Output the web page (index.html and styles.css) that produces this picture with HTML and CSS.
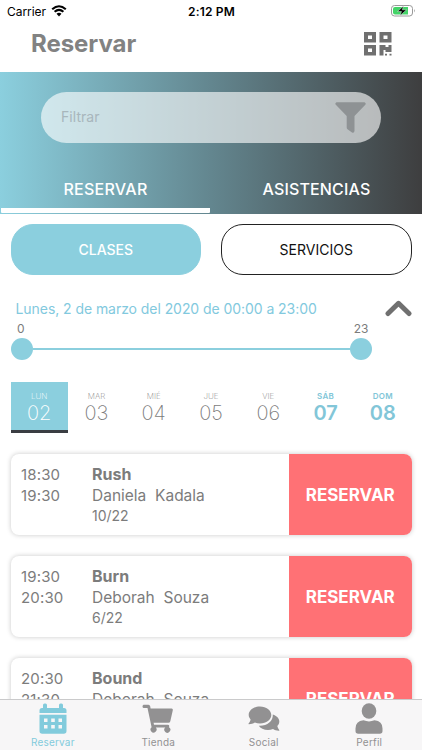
FILE: index.html
```html
<!DOCTYPE html>
<html lang="es">
<head>
<meta charset="utf-8">
<meta name="viewport" content="width=device-width, initial-scale=1">
<title>Reservar</title>
<link rel="stylesheet" href="styles.css">
</head>
<body>
<div class="app">
  <div class="status">
    <div class="status-left"><span class="carrier">Carrier</span>
      <svg class="wifi" viewBox="0 0 16 12"><path d="M1.2 4.3Q8-1.8 14.8 4.3M3.6 6.8Q8 3 12.4 6.8" fill="none" stroke="#000" stroke-width="2.1"/><path d="M5.5 8.7Q8 6.7 10.5 8.7L8 11.5Z"/></svg>
    </div>
    <span class="clock">2:12 PM</span>
    <svg class="battery" viewBox="0 0 25 12"><rect x=".5" y=".5" width="21" height="10.5" rx="3" fill="#fff" stroke="#999"/><path d="M4 2h13v7.500H4Q2 9.500 2 7.500V4Q2 2 4 2Z" fill="#43d468"/><path d="M23 4q1.700 1.700 0 3.500Z" fill="#999"/><path d="M12.500 1 6.500 6.500h4L9 10.700l6.500-5.900h-4.200Z" stroke="#fff" stroke-width=".4"/></svg>
  </div>
  <header class="header">
    <h1>Reservar</h1>
    <svg class="qr" viewBox="0 0 28 24" fill="#707070"><path fill-rule="evenodd" d="M0 0h12v10.500H0ZM4 3.500v3.500h4V3.500ZM15.500 0h12v10.500h-12ZM19.500 3.500v3.500h4V3.500ZM0 13h12v10.500H0ZM4 16.500V20h4v-3.500ZM15.500 13h6v2h3v-2h3v7h-6v-2h-2v5.500h-4ZM21 21.700h2v1.800h-2ZM25.500 21.700h2v1.800h-2Z"/></svg>
  </header>
  <section class="hero">
    <div class="search"><span class="placeholder">Filtrar</span>
      <svg class="funnel" viewBox="0 0 31 31"><path d="M1.500.3h28q2 1 .8 2.500L19.500 14v15q-.5 2.500-2.500 1.400l-4.500-3.200q-.8-.7-.8-1.700V14L.8 2.800Q-.4 1.300 1.500.3Z" fill="#8e9294"/></svg>
    </div>
    <nav class="tabs"><div class="tab tab-active"><span class="tab-one">RESERVAR</span></div><div class="tab"><span class="tab-two">ASISTENCIAS</span></div></nav>
  </section>
  <main class="content">
    <div class="types"><button class="type type-active"><span>CLASES</span></button><button class="type"><span>SERVICIOS</span></button></div>
    <div class="date"><span class="date-text">Lunes, 2 de marzo del 2020 de 00:00 a 23:00</span>
      <svg class="chevron" viewBox="0 0 27 17"><path d="M3 13.500 13.500 3.300 24 13.500" fill="none" stroke="#707070" stroke-width="5" stroke-linecap="round" stroke-linejoin="round"/></svg>
    </div>
    <div class="range-labels"><span>0</span><span>23</span></div>
    <div class="range"><i class="knob"></i><i class="track"></i><i class="knob"></i></div>
    <div class="days">
      <div class="day selected"><span class="name">LUN</span><span class="num">02</span></div>
      <div class="day"><span class="name">MAR</span><span class="num">03</span></div>
      <div class="day"><span class="name">MIÉ</span><span class="num">04</span></div>
      <div class="day"><span class="name">JUE</span><span class="num">05</span></div>
      <div class="day"><span class="name">VIE</span><span class="num">06</span></div>
      <div class="day weekend"><span class="name">SÁB</span><span class="num">07</span></div>
      <div class="day weekend"><span class="name">DOM</span><span class="num">08</span></div>
    </div>
    <div class="cards">
      <article class="card"><div class="times"><span>18:30</span><span>19:30</span></div><div class="info"><strong>Rush</strong><span class="coach">Daniela&nbsp; Kadala</span><span class="spots">10/22</span></div><button class="book"><span>RESERVAR</span></button></article>
      <article class="card"><div class="times"><span>19:30</span><span>20:30</span></div><div class="info"><strong>Burn</strong><span class="coach">Deborah&nbsp; Souza</span><span class="spots">6/22</span></div><button class="book"><span>RESERVAR</span></button></article>
      <article class="card"><div class="times"><span>20:30</span><span>21:30</span></div><div class="info"><strong>Bound</strong><span class="coach">Deborah&nbsp; Souza</span></div><button class="book"><span>RESERVAR</span></button></article>
    </div>
  </main>
  <footer class="bar">
    <div class="item item-active">
      <svg viewBox="0 0 32 32"><path fill-rule="evenodd" d="M6 5V2q0-1.500 1.500-1.500h1Q10 .5 10 2v3h12V2q0-1.500 1.500-1.500h1Q26 .5 26 2v3h1q2.500 0 2.500 2.500V10h-27V7.500Q2.500 5 5 5ZM2.500 11.800h27V28q0 2.700-2.700 2.700H5.200Q2.500 30.700 2.500 28ZM7 15.500V19h3.500v-3.500Zm7.200 0V19h3.600v-3.500Zm7.300 0V19H25v-3.500ZM7 22v3.500h3.500V22Zm7.200 0v3.500h3.600V22Zm7.300 0v3.500H25V22Z"/></svg><span>Reservar</span></div>
    <div class="item">
      <svg viewBox="0 0 32 32"><path d="M1.500 1.700h5q1.300 0 1.700 1.600l.4 2.200h21q1.600 0 1.200 1.700l-2.500 11q-.4 1.500-2 1.500H11.600l.4 2h14q1.600.2 1.200 2l-.2.500a3 3 0 1 1-3.700.3H13.800a3 3 0 1 1-4.200-.3L5.500 5h-4Q.5 4.800.5 3.500t1-1.800Z"/></svg><span>Tienda</span></div>
    <div class="item">
      <svg viewBox="0 0 32 32"><path d="M12 3.500c6.300 0 11.300 3.800 11.300 8.500s-5 8.500-11.300 8.500c-1.900 0-3.600-.3-5.100-.9-1.700 1.200-3.700 1.700-6 1.700-.5 0-.7-.5-.3-.9 1.100-1.200 1.800-2.600 2-4C1.400 15 .7 13.600.7 12c0-4.700 5-8.500 11.300-8.500Z"/><path d="M24.800 11.500c3.900 1.200 6.500 3.900 6.500 7 0 1.700-.7 3.300-2 4.600.3 1.400.9 2.700 1.900 3.800.4.400.1.900-.4.900-2.200 0-4.200-.6-5.800-1.700-1.500.6-3.200.9-5 .9-4.100 0-7.700-1.700-9.200-4.200 8 .5 14.500-4.500 14-11.300Z"/></svg><span>Social</span></div>
    <div class="item">
      <svg viewBox="0 0 32 32"><ellipse cx="16" cy="8" rx="7.300" ry="7.700"/><path d="M2.500 25.500q0-7.500 8-8.200 5.500 2.200 11 0 8 .7 8 8.200v2.500q0 2.700-2.700 2.700H5.200Q2.500 30.700 2.500 28Z"/></svg><span>Perfil</span></div>
  </footer>
</div>
</body>
</html>
```
FILE: styles.css
```css
* { box-sizing: border-box; }
body { margin: 0; background: #fff; font-family: Inter, "Liberation Sans", sans-serif; color: #7c7c7c; }
button { font: inherit; padding: 0; border: 0; background: none; }
svg { display: block; flex: none; }
span { white-space: nowrap; }
.app { width: 422px; height: 750px; overflow: hidden; display: flex; flex-direction: column; }
.status { height: 22px; flex: none; display: grid; grid-template-columns: 1fr auto 1fr; align-items: center; padding: 0 6px 0 7px; color: #000; }
.status-left { display: flex; align-items: center; gap: 5px; font-size: 12px; }
.carrier { letter-spacing: -.05px; }
.wifi { width: 16px; height: 12px; }
.clock { font-size: 12px; font-weight: 600; letter-spacing: .2px; }
.battery { width: 25px; height: 12px; justify-self: end; }
.header { height: 49.500px; flex: none; display: flex; justify-content: space-between; padding: 7px 30px 0 31px; }
h1 { margin: 0; font-size: 24px; line-height: 30px; font-weight: 700; color: #828282; letter-spacing: -.05px; }
.qr { width: 28px; height: 24px; margin-top: 3px; }
.hero { height: 142.500px; flex: none; padding-top: 20.500px; background: linear-gradient(90deg, #8bcfde, #63868f 50%, #3e3e3f); display: flex; flex-direction: column; }
.search { height: 51px; flex: none; margin: 0 41px; padding: 0 15px 0 20px; border-radius: 26px; background: rgba(255,255,255,.62); display: flex; align-items: center; justify-content: space-between; }
.placeholder { font-size: 14px; color: #a8b6bc; padding-bottom: 2px; letter-spacing: .05px; }
.funnel { width: 31px; height: 31px; }
.tabs { flex: 1; display: grid; grid-template-columns: 1fr 1fr; padding-top: 21px; }
.tab { margin: 0 1px; display: flex; justify-content: center; align-items: center; padding-top: 6px; color: #fff; font-size: 16px; font-weight: 500; border-bottom: 5px solid transparent; height: 49px; }
.tab-active { border-color: #fff; border-radius: 1px; }
.tab-one { letter-spacing: .25px; }
.tab-two { letter-spacing: .15px; }
.content { flex: 1; min-height: 0; padding: 10px 10.500px 0; overflow: hidden; }
.types { display: grid; grid-template-columns: 1fr 1fr; gap: 20px; height: 51px; }
.type { border: 1px solid #222; border-radius: 22px; font-size: 14px; color: #111; }
.type-active { background: #8bcfde; border-color: #8bcfde; color: #fff; font-weight: 500; }
.date { height: 46px; padding: 22px 0 0 5px; display: flex; justify-content: space-between; }
.date-text { font-size: 14px; line-height: 24px; color: #82c9de; letter-spacing: -.06px; }
.chevron { width: 27px; height: 17px; margin-top: 3px; }
.range-labels { width: 361px; height: 16px; display: flex; justify-content: space-between; padding: 0 3px 0 6.500px; font-size: 12px; line-height: 16px; }
.range { width: 361px; height: 22px; display: flex; align-items: center; margin-top: 1px; }
.knob { width: 22px; height: 22px; border-radius: 50%; background: #8bcfde; }
.track { height: 2px; flex: 1; background: #8bcfde; }
.days { height: 51px; margin-top: 22px; display: grid; grid-template-columns: repeat(7, 1fr); }
.day { display: flex; flex-direction: column; align-items: center; padding-top: 9px; font-weight: 200; }
.name { font-size: 8px; line-height: 10px; }
.num { font-size: 20px; line-height: 24px; }
.selected { background: #8bcfde; color: #fff; border-bottom: 3px solid #3a3d42; }
.weekend { color: #82c6d8; font-weight: 600; }
.weekend .name { letter-spacing: .3px; }
.cards { margin-top: 20.500px; display: flex; flex-direction: column; gap: 20.500px; }
.card { height: 81.500px; flex: none; border-radius: 8px; box-shadow: 0 0 5px rgba(0,0,0,.22); display: grid; grid-template-columns: 81.500px 197px 1fr; background: #fff; }
.times { padding: 10px 0 0 10.500px; font-size: 15px; letter-spacing: .15px; line-height: 21px; display: flex; flex-direction: column; }
.info { padding-top: 10px; display: flex; flex-direction: column; align-items: flex-start; font-size: 15.500px; line-height: 21px; }
.info strong { font-size: 16px; font-weight: 700; }
.spots { font-size: 14px; line-height: 20px; }
.book { border-radius: 0 8px 8px 0; background: #ff7175; color: #fff; font-size: 17px; font-weight: 700; padding-top: 1px; }
.bar { height: 51px; flex: none; background: #f7f6f7; border-top: 1px solid #cacacb; display: grid; grid-template-columns: repeat(4, 1fr); padding-top: 3px; }
.item { display: flex; flex-direction: column; align-items: center; font-size: 10px; line-height: 14px; color: #929192; letter-spacing: .2px; }
.item svg { width: 32px; height: 32px; fill: #929192; }
.item-active { color: #82cbdc; }
.item-active svg { fill: #82cbdc; }
```
